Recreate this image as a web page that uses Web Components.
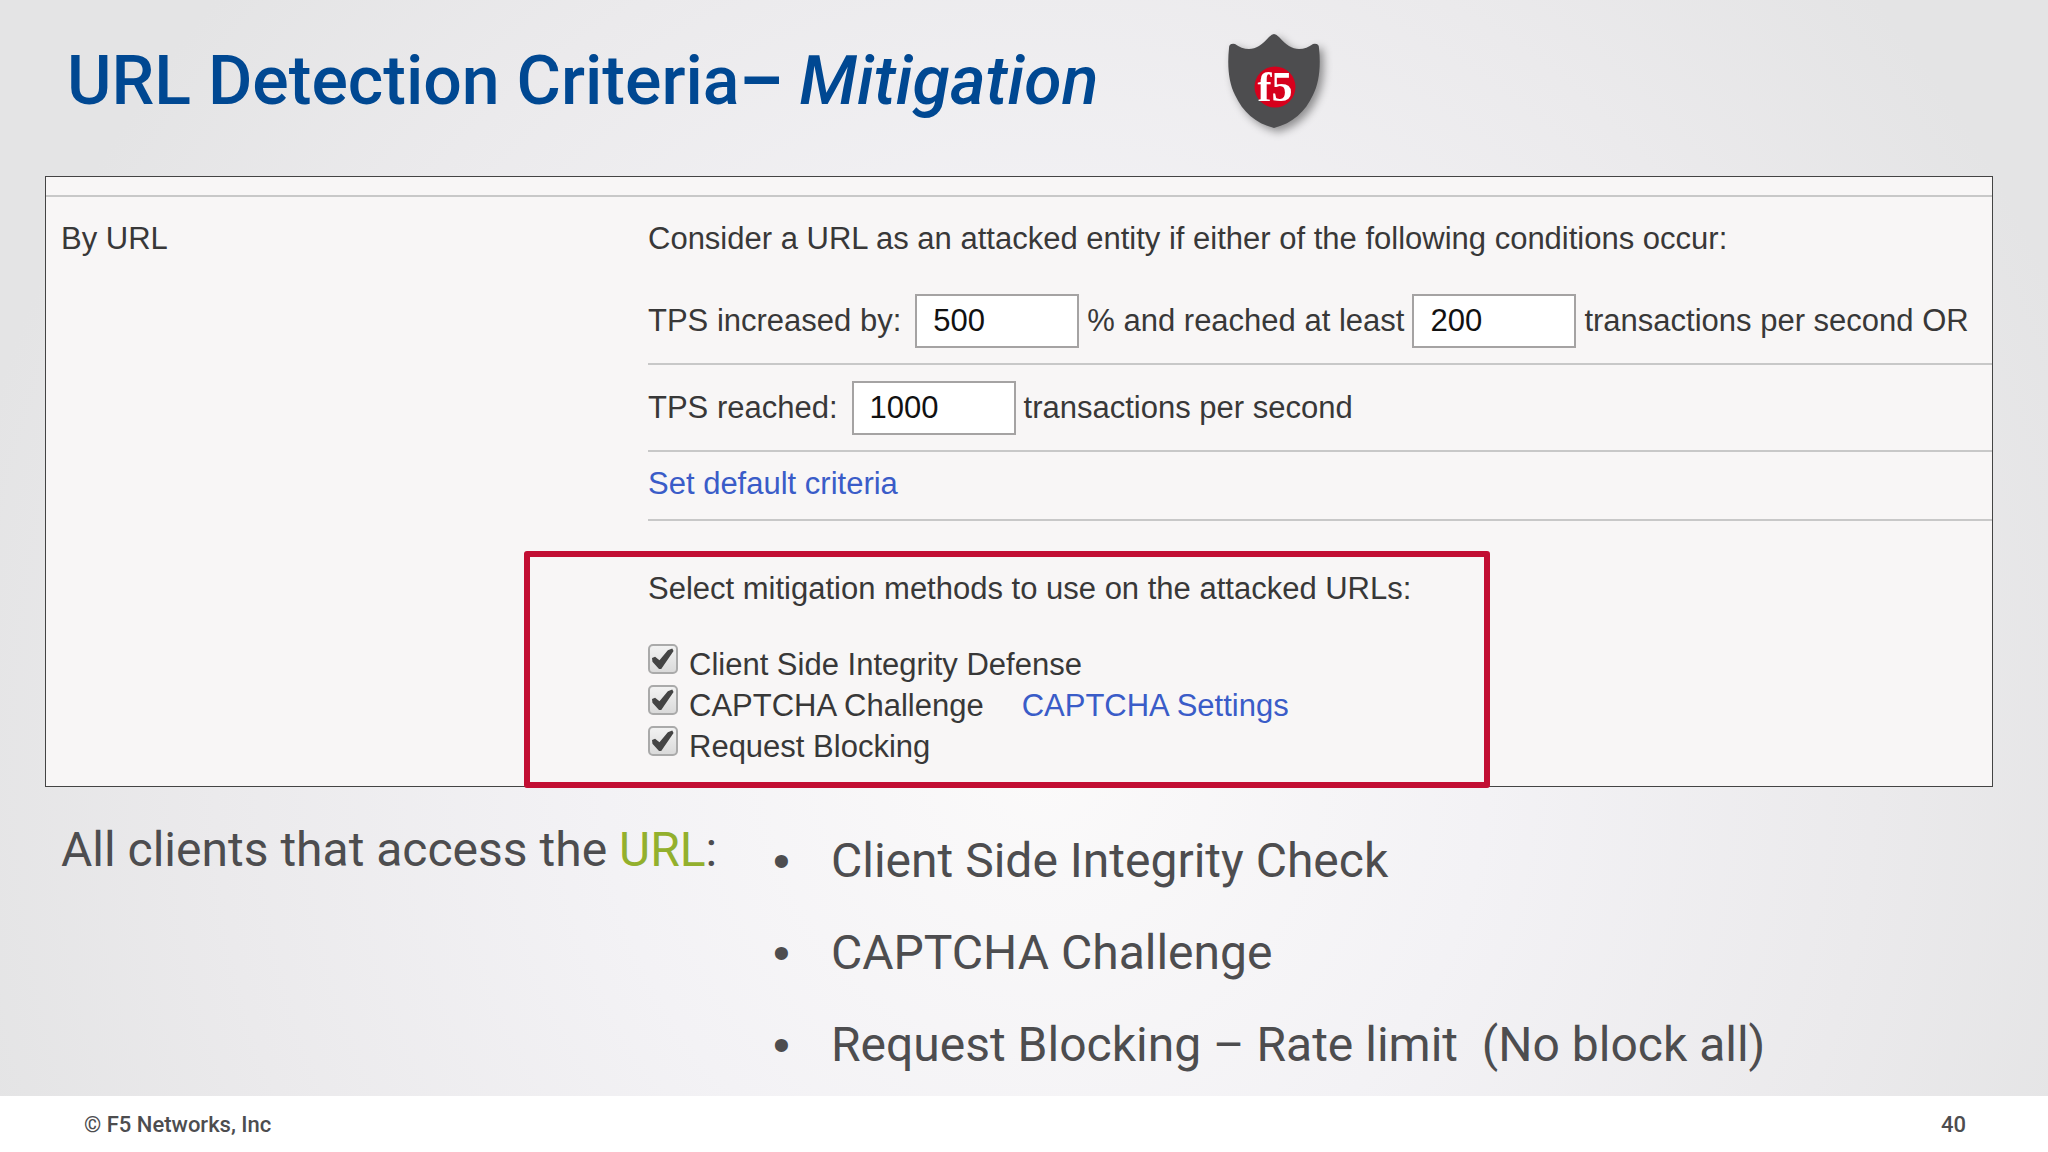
<!DOCTYPE html>
<html lang="en">
<head>
<meta charset="utf-8">
<title>URL Detection Criteria – Mitigation</title>
<style>
  body {
    margin: 0;
    font-family: Roboto, "Liberation Sans", sans-serif;
    color: #4d4d4f;
  }
  em { font-style: normal; color: #93b02d; }
</style>
</head>
<body>
<deck-slide page="40">
  <span slot="title">URL Detection Criteria<b>–</b> <i>Mitigation</i></span>
  <f5-shield slot="badge"></f5-shield>
  <settings-panel heading="By URL">
    <p>Consider a URL as an attacked entity if either of the following conditions occur:</p>
    <settings-row>
      <threshold-field value="500">
        <span slot="before">TPS increased by:</span>
      </threshold-field>
      <threshold-field value="200" inline>
        <span slot="before">% and reached at least</span>
        transactions per second OR
      </threshold-field>
    </settings-row>
    <settings-row>
      <threshold-field value="1000">
        <span slot="before">TPS reached:</span>
        transactions per second
      </threshold-field>
    </settings-row>
    <settings-row compact><a href="#default">Set default criteria</a></settings-row>
    <mitigation-box>
      <span slot="heading">Select mitigation methods to use on the attacked URLs:</span>
      <check-option>Client Side Integrity Defense</check-option>
      <check-option>CAPTCHA Challenge<a slot="extra" href="#captcha">CAPTCHA Settings</a></check-option>
      <check-option>Request Blocking</check-option>
    </mitigation-box>
  </settings-panel>
  <client-summary slot="summary">
    <span slot="intro">All clients that access the <em>URL</em>:</span>
    <bullet-item role="listitem">Client Side Integrity Check</bullet-item>
    <bullet-item role="listitem">CAPTCHA Challenge</bullet-item>
    <bullet-item role="listitem">Request Blocking – Rate limit&nbsp; (No block all)</bullet-item>
  </client-summary>
  <span slot="copyright">© F5 Networks, Inc</span>
</deck-slide>

<script>
const define = (name, html, setup) => {
  const template = document.createElement("template");
  template.innerHTML = html;
  customElements.define(name, class extends HTMLElement {
    constructor() {
      super();
      this.attachShadow({ mode: "open" });
      this.shadowRoot.appendChild(template.content.cloneNode(true));
      if (setup) setup(this, this.shadowRoot);
    }
  });
};

define("deck-slide", `
  <style>
    :host {
      display: flex;
      flex-direction: column;
      min-height: 100vh;
      background: radial-gradient(ellipse 54% 100% at 51% 66%, #fbfafa 0%, #f3f2f5 40%, #ebeaec 75%, #e4e4e5 100%);
    }
    header {
      display: flex;
      align-items: center;
      gap: 130px;
      padding: 34px 67px 0;
    }
    h1 {
      margin: 0;
      font-size: 68px;
      font-weight: 500;
      line-height: 80px;
      color: #004892;
    }
    main {
      flex: 1;
      padding: 48px 55px 0 45px;
    }
    footer {
      display: flex;
      justify-content: space-between;
      align-items: center;
      height: 56px;
      padding: 0 82px 0 84px;
      background: #fff;
      font-size: 22px;
      font-weight: 500;
    }
  </style>
  <header>
    <h1><slot name="title"></slot></h1>
    <slot name="badge"></slot>
  </header>
  <main>
    <slot></slot>
    <slot name="summary"></slot>
  </main>
  <footer>
    <slot name="copyright"></slot>
    <span class="page"></span>
  </footer>
`, (host, root) => {
  root.querySelector(".page").textContent = host.getAttribute("page");
});

define("f5-shield", `
  <style>
    :host { display: block; height: 94px; }
    svg { display: block; overflow: visible; filter: drop-shadow(4px 4px 4px rgba(0, 0, 0, 0.4)); }
    text { font: bold 42px "Liberation Serif", serif; }
  </style>
  <svg width="92" height="94" viewBox="0 0 92 94" role="img" aria-label="F5 shield">
    <path fill="#4d4d4f" d="M46 0Q48 0 51 3C58 11 64 15 71 15C76 15 81 13 85 10Q91 9 91 14C93 33 91 49 85 61C77 78 65 89 46 94C27 89 15 78 7 61C1 49 -1 33 1 14Q1 9 7 10C11 13 16 15 21 15C28 15 34 11 41 3Q44 0 46 0Z"/>
    <circle cx="47" cy="53" r="20.5" fill="#d6001c"/>
    <text x="47" y="67" text-anchor="middle" fill="#fff">f5</text>
  </svg>
`);

define("settings-panel", `
  <style>
    :host {
      display: block;
      border: 1px solid #444;
      background: #f8f6f6;
      color: #383838;
      font-family: "Liberation Sans", sans-serif;
      font-size: 31px;
      line-height: 40px;
    }
    section {
      display: grid;
      grid-template-columns: 587px 1fr;
      margin-top: 18px;
      padding: 22px 0 0 15px;
      border-top: 2px solid #c8c8c8;
    }
    h2 { margin: 0; font: inherit; }
    ::slotted(p) { margin: 0 0 19px; }
  </style>
  <section>
    <h2></h2>
    <div><slot></slot></div>
  </section>
`, (host, root) => {
  root.querySelector("h2").textContent = host.getAttribute("heading");
});

define("settings-row", `
  <style>
    :host {
      display: flex;
      gap: 8px;
      padding: 16px 0 15px;
      border-bottom: 2px solid #c8c8c8;
      white-space: nowrap;
    }
    :host([compact]) { padding: 12px 0 15px; }
    ::slotted(a) { color: #3a5cc8; text-decoration: none; }
  </style>
  <slot></slot>
`);

define("threshold-field", `
  <style>
    :host { display: flex; align-items: center; gap: 8px; }
    label { margin-right: 6px; }
    :host([inline]) label { margin-right: 0; }
    input {
      box-sizing: border-box;
      width: 164px;
      height: 54px;
      padding: 0 16px;
      border: 2px solid #a5a3a3;
      border-radius: 0;
      background: #fff;
      color: #111;
      font: inherit;
    }
  </style>
  <label for="amount"><slot name="before"></slot></label>
  <input id="amount" type="text" inputmode="numeric">
  <slot></slot>
`, (host, root) => {
  root.querySelector("input").value = host.getAttribute("value");
});

// The frame reaches out of the settings column and covers the panel's bottom edge.
define("mitigation-box", `
  <style>
    :host { display: block; margin: 30px 0 -2px -124px; }
    fieldset {
      box-sizing: border-box;
      width: 966px;
      max-width: 100%;
      margin: 0;
      padding: 12px 0 15px 118px;
      border: 6px solid #c20e33;
      border-radius: 3px;
    }
    legend { float: left; width: 100%; margin-bottom: 35px; padding: 0; }
    .options { clear: both; }
  </style>
  <fieldset>
    <legend><slot name="heading"></slot></legend>
    <div class="options"><slot></slot></div>
  </fieldset>
`);

define("check-option", `
  <style>
    :host { display: flex; line-height: 41px; }
    label { display: flex; gap: 11px; }
    input {
      appearance: none;
      box-sizing: border-box;
      width: 30px;
      height: 30px;
      margin: 0;
      border: 2px solid #aaa;
      border-radius: 5px;
      background: linear-gradient(#f2f2f2, #dadada);
    }
    input:checked::before {
      content: "";
      display: block;
      width: 22px;
      height: 22px;
      margin: 2px;
      background: #444;
      clip-path: polygon(0 46%, 14% 40%, 34% 56%, 72% 10%, 92% 2%, 98% 14%, 42% 96%, 32% 96%, 2% 62%);
    }
    ::slotted(a) { margin-left: 38px; color: #3a5cc8; text-decoration: none; }
  </style>
  <label><input type="checkbox" checked><span><slot></slot></span></label>
  <slot name="extra"></slot>
`);

define("client-summary", `
  <style>
    :host {
      display: grid;
      grid-template-columns: 712px 1fr;
      padding: 35px 0 22px 16px;
      font-size: 48px;
      line-height: 56px;
    }
    p { margin: 0; }
    .list { display: flex; flex-direction: column; gap: 36px; padding-top: 11px; }
  </style>
  <p><slot name="intro"></slot></p>
  <div class="list" role="list"><slot></slot></div>
`);

define("bullet-item", `
  <style>
    :host { display: grid; grid-template-columns: 58px 1fr; }
    .mark { font-family: "Liberation Sans", sans-serif; }
  </style>
  <span class="mark">•</span>
  <span><slot></slot></span>
`);
</script>
</body>
</html>
